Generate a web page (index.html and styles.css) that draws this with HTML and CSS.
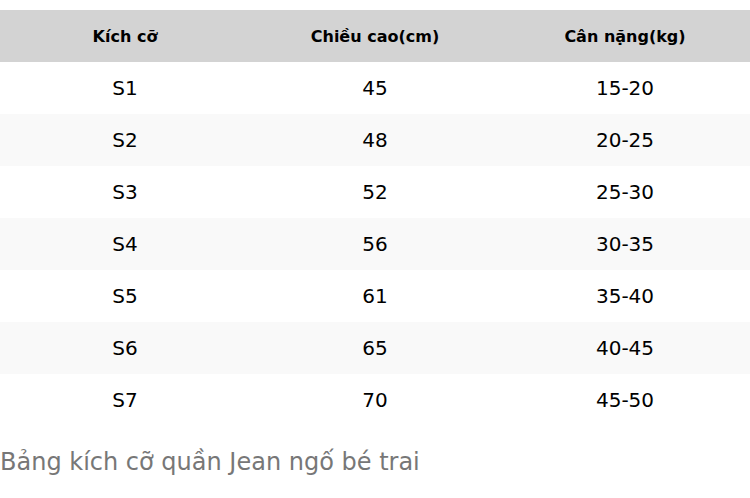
FILE: index.html
```html
<!DOCTYPE html>
<html lang="vi">
<head>
<meta charset="utf-8">
<link rel="stylesheet" href="styles.css">
</head>
<body>
<table class="size-table">
  <caption class="size-caption">Bảng kích cỡ quần Jean ngố bé trai</caption>
  <thead>
    <tr><th>Kích cỡ</th><th>Chiều cao(cm)</th><th>Cân nặng(kg)</th></tr>
  </thead>
  <tbody>
    <tr><td>S1</td><td>45</td><td>15-20</td></tr>
    <tr><td>S2</td><td>48</td><td>20-25</td></tr>
    <tr><td>S3</td><td>52</td><td>25-30</td></tr>
    <tr><td>S4</td><td>56</td><td>30-35</td></tr>
    <tr><td>S5</td><td>61</td><td>35-40</td></tr>
    <tr><td>S6</td><td>65</td><td>40-45</td></tr>
    <tr><td>S7</td><td>70</td><td>45-50</td></tr>
  </tbody>
</table>
</body>
</html>
```
FILE: styles.css
```css
html, body {
  margin: 0;
  padding: 0;
  background: #ffffff;
}
body {
  padding-top: 10px;
  font-family: "DejaVu Sans", sans-serif;
  color: #000;
}
.size-table {
  width: 750px;
  border-collapse: collapse;
  table-layout: fixed;
}
.size-table th,
.size-table td {
  width: 250px;
  height: 52px;
  padding: 0;
  text-align: center;
  vertical-align: middle;
}
.size-table th {
  background: #d3d3d3;
  font-size: 16px;
  font-weight: bold;
}
.size-table td {
  font-size: 20px;
}
.size-table tbody tr:nth-child(even) {
  background: #f9f9f9;
}
.size-caption {
  caption-side: bottom;
  text-align: left;
  font-size: 24px;
  line-height: 36px;
  padding-top: 18px;
  color: #777777;
}
```
